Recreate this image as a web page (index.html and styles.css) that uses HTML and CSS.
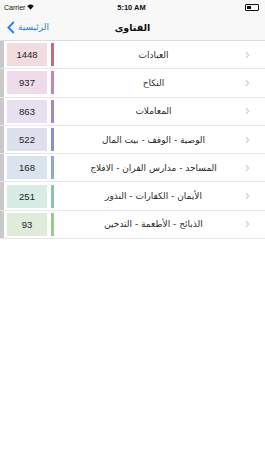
FILE: index.html
```html
<!DOCTYPE html>
<html lang="ar">
<head>
    <meta charset="UTF-8">
    <meta name="viewport" content="width=device-width, initial-scale=1.0">
    <title>الفتاوى</title>
    <link rel="stylesheet" href="styles.css">
</head>
<body>

    <div class="status-bar">
        <div class="carrier">Carrier
            <svg class="wifi" width="7" height="6" viewBox="0 0 14 11">
                <path d="M7 11 L0.5 3.5 A10 10 0 0 1 13.5 3.5 Z" fill="#111"/>
            </svg>
        </div>
        <div class="clock">5:10 AM</div>
        <div class="battery"><span class="battery-level"></span></div>
    </div>

    <div class="nav-bar">
        <div class="back">
            <svg width="8" height="13" viewBox="0 0 8 13">
                <path d="M6.8 1 L1.4 6.5 L6.8 12" fill="none" stroke="#1b7ef6" stroke-width="1.8"/>
            </svg>
            <span dir="rtl">الرئيسية</span>
        </div>
        <div class="nav-title" dir="rtl">الفتاوى</div>
    </div>

    <!-- قائمة الأبواب -->
    <ul class="list">
        <li class="row">
            <span class="strip"></span>
            <span class="count c1">1448</span>
            <span class="mark m1"></span>
            <span class="label" dir="rtl">العبادات</span>
            <span class="chevron">&rsaquo;</span>
        </li>
        <li class="row">
            <span class="strip"></span>
            <span class="count c2">937</span>
            <span class="mark m2"></span>
            <span class="label" dir="rtl">النكاح</span>
            <span class="chevron">&rsaquo;</span>
        </li>
        <li class="row">
            <span class="strip"></span>
            <span class="count c3">863</span>
            <span class="mark m3"></span>
            <span class="label" dir="rtl">المعاملات</span>
            <span class="chevron">&rsaquo;</span>
        </li>
        <li class="row">
            <span class="strip"></span>
            <span class="count c4">522</span>
            <span class="mark m4"></span>
            <span class="label" dir="rtl">الوصية - الوقف - بيت المال</span>
            <span class="chevron">&rsaquo;</span>
        </li>
        <li class="row">
            <span class="strip"></span>
            <span class="count c5">168</span>
            <span class="mark m5"></span>
            <span class="label" dir="rtl">المساجد - مدارس القران - الافلاج</span>
            <span class="chevron">&rsaquo;</span>
        </li>
        <li class="row">
            <span class="strip"></span>
            <span class="count c6">251</span>
            <span class="mark m6"></span>
            <span class="label" dir="rtl">الأيمان - الكفارات - النذور</span>
            <span class="chevron">&rsaquo;</span>
        </li>
        <li class="row">
            <span class="strip"></span>
            <span class="count c7">93</span>
            <span class="mark m7"></span>
            <span class="label" dir="rtl">الذبائح - الأطعمة - التدخين</span>
            <span class="chevron">&rsaquo;</span>
        </li>
    </ul>

</body>
</html>
```

FILE: styles.css
```css
body {
    margin: 0;
    padding: 0;
    background-color: #fff;
    font-family: 'Liberation Sans', 'DejaVu Sans', sans-serif;
    color: #111;
}

.status-bar {
    height: 14px;
    display: flex;
    align-items: center;
    justify-content: space-between;
    padding: 0 6px 0 4px;
    font-size: 7px;
    background-color: #f8f8f8;
}

.carrier {
    display: flex;
    align-items: center;
    gap: 2px;
    width: 50px;
}

.clock {
    font-weight: bold;
    font-size: 7.5px;
}

.battery {
    width: 50px;
    display: flex;
    justify-content: flex-end;
}

.battery-level {
    display: block;
    width: 11px;
    height: 4px;
    border: 0.5px solid #111;
    border-radius: 1px;
    background: linear-gradient(to right, #111 50%, transparent 50%);
    background-clip: content-box;
    padding: 0.5px;
}

.nav-bar {
    height: 26px;
    display: flex;
    align-items: center;
    position: relative;
    background-color: #f8f8f8;
    border-bottom: 1px solid #ddd;
}

.back {
    display: flex;
    align-items: center;
    gap: 3px;
    padding-left: 7px;
    color: #1b7ef6;
    font-family: 'DejaVu Sans', sans-serif;
    font-size: 9px;
}

.nav-title {
    position: absolute;
    left: 0;
    right: 0;
    text-align: center;
    font-family: 'DejaVu Sans', sans-serif;
    font-weight: bold;
    font-size: 9.5px;
    pointer-events: none;
}

.list {
    list-style: none;
    margin: 0;
    padding: 0;
}

.row {
    height: 28.3px;
    display: flex;
    align-items: center;
    border-bottom: 1px solid #e6e6e6;
    box-sizing: border-box;
}

.strip {
    width: 4px;
    align-self: stretch;
    background-color: #c9c9c9;
}

.count {
    width: 40px;
    height: 23px;
    margin-left: 3px;
    display: flex;
    align-items: center;
    justify-content: center;
    font-size: 9.5px;
    color: #222;
}

.mark {
    width: 3px;
    height: 23px;
    margin-left: 4px;
}

.label {
    flex: 1;
    padding-left: 8px;
    text-align: center;
    font-family: 'DejaVu Sans', sans-serif;
    font-size: 9px;
    color: #2a2a2a;
}

.chevron {
    width: 20px;
    text-align: left;
    color: #c7c7cc;
    font-size: 14px;
    line-height: 1;
    margin-top: -2px;
}

.c1 { background-color: #f1dde0; }
.c2 { background-color: #efdcea; }
.c3 { background-color: #e6e0ef; }
.c4 { background-color: #dfe0ee; }
.c5 { background-color: #d9e4ee; }
.c6 { background-color: #d8ece6; }
.c7 { background-color: #dfecda; }

.m1 { background-color: #c8687f; }
.m2 { background-color: #c884b8; }
.m3 { background-color: #a088c6; }
.m4 { background-color: #8c90c6; }
.m5 { background-color: #8ca8cb; }
.m6 { background-color: #8ac4b0; }
.m7 { background-color: #9ac890; }
```
